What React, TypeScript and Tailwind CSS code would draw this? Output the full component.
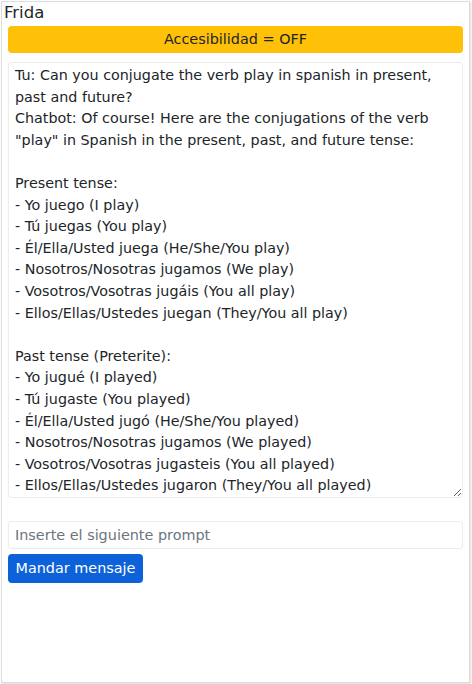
import React from "react";

const text = `Tu: Can you conjugate the verb play in spanish in present, past and future?
Chatbot: Of course! Here are the conjugations of the verb "play" in Spanish in the present, past, and future tense:

Present tense:
- Yo juego (I play)
- Tú juegas (You play)
- Él/Ella/Usted juega (He/She/You play)
- Nosotros/Nosotras jugamos (We play)
- Vosotros/Vosotras jugáis (You all play)
- Ellos/Ellas/Ustedes juegan (They/You all play)

Past tense (Preterite):
- Yo jugué (I played)
- Tú jugaste (You played)
- Él/Ella/Usted jugó (He/She/You played)
- Nosotros/Nosotras jugamos (We played)
- Vosotros/Vosotras jugasteis (You all played)
- Ellos/Ellas/Ustedes jugaron (They/You all played)

Future tense:
- Yo jugaré (I will play)`;

export default function App() {
  return (
    <div
      className="w-[472px] h-[684px] bg-white p-[1px]"
      style={{ fontFamily: '"DejaVu Sans", sans-serif' }}
    >
      <div className="w-[469px] h-[682px] border border-[#dcdcdc] shadow-[1px_1px_2px_rgba(0,0,0,0.15)] bg-white flex flex-col px-[6px]">
        <div className="text-[16.5px] leading-[24px] text-[#212529] -ml-[4px] -mt-[1px]">Frida</div>
        <div className="mt-[1px] h-[27px] rounded-[4px] bg-[#ffc107] flex items-center justify-center text-[14.4px] text-[#212529]">
          Accesibilidad = OFF
        </div>
        <textarea
          readOnly
          value={text}
          className="mt-[9px] h-[436px] w-full border border-[#ececec] rounded-[3px] px-[6px] pt-[2px] pb-0 text-[14.3px] leading-[21.6px] text-[#212529] overflow-hidden outline-none"
          style={{ fontFamily: '"DejaVu Sans", sans-serif' }}
        />
        <input
          placeholder="Inserte el siguiente prompt"
          className="mt-[23px] h-[28px] w-full border border-[#ececec] rounded-[3px] px-[6px] text-[14.4px] text-[#212529] placeholder:text-[#6c757d] outline-none"
          style={{ fontFamily: '"DejaVu Sans", sans-serif' }}
        />
        <button className="mt-[5px] self-start h-[29px] w-[135px] rounded-[4px] bg-[#0d62d9] text-white text-[14.4px] flex items-center justify-center">
          Mandar mensaje
        </button>
      </div>
    </div>
  );
}
